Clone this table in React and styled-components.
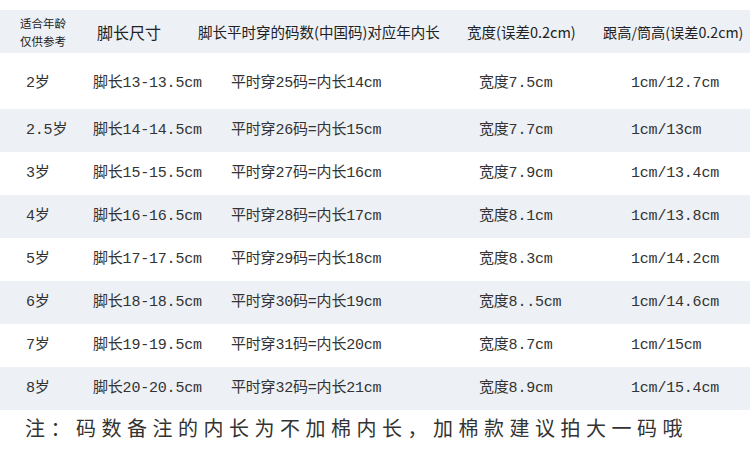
import React from "react";
import styled, { createGlobalStyle } from "styled-components";

const Global = createGlobalStyle`
  html, body { margin: 0; padding: 0; background: #ffffff; }
  body { font-family: "Noto Sans CJK SC", "Noto Sans", sans-serif; }
`;

const Page = styled.div`
  width: 750px;
  height: 458px;
  padding-top: 10px;
  box-sizing: border-box;
  background: #ffffff;
  overflow: hidden;
`;

const Table = styled.div`
  display: flex;
  flex-direction: column;
`;

const Row = styled.div`
  display: grid;
  grid-template-columns: 85px 110px 260px 135px 160px;
  height: ${(p) => p.$h}px;
  padding-top: ${(p) => p.$shift || 0}px;
  box-sizing: border-box;
  background: ${(p) => (p.$shade ? "#edf0f5" : "#ffffff")};
`;

const Cell = styled.div`
  display: flex;
  align-items: center;
  min-width: 0;
  padding-left: ${(p) => p.$pad}px;
  white-space: nowrap;
  overflow: visible;
`;

const HeadText = styled.span`
  font-family: "Noto Sans CJK SC", sans-serif;
  font-size: ${(p) => p.$size}px;
  line-height: ${(p) => p.$lh || 20}px;
  color: #222222;
`;

const DataText = styled.span`
  font-family: "Liberation Mono", "Noto Sans CJK SC", monospace;
  font-size: 15px;
  line-height: 20px;
  color: #333333;
  letter-spacing: -0.2px;
`;

const Note = styled.div`
  padding: 4px 0 0 25px;
  font-family: "Noto Sans CJK SC", sans-serif;
  font-size: 20px;
  line-height: 28px;
  letter-spacing: 5.5px;
  color: #333333;
  white-space: nowrap;
`;

const columns = [
  { headPad: 20, dataPad: 26 },
  { headPad: 12, dataPad: 8 },
  { headPad: 3, dataPad: 36 },
  { headPad: 12, dataPad: 24 },
  { headPad: 13, dataPad: 41 },
];

const rows = [
  ["2岁", "脚长13-13.5cm", "平时穿25码=内长14cm", "宽度7.5cm", "1cm/12.7cm"],
  ["2.5岁", "脚长14-14.5cm", "平时穿26码=内长15cm", "宽度7.7cm", "1cm/13cm"],
  ["3岁", "脚长15-15.5cm", "平时穿27码=内长16cm", "宽度7.9cm", "1cm/13.4cm"],
  ["4岁", "脚长16-16.5cm", "平时穿28码=内长17cm", "宽度8.1cm", "1cm/13.8cm"],
  ["5岁", "脚长17-17.5cm", "平时穿29码=内长18cm", "宽度8.3cm", "1cm/14.2cm"],
  ["6岁", "脚长18-18.5cm", "平时穿30码=内长19cm", "宽度8..5cm", "1cm/14.6cm"],
  ["7岁", "脚长19-19.5cm", "平时穿31码=内长20cm", "宽度8.7cm", "1cm/15cm"],
  ["8岁", "脚长20-20.5cm", "平时穿32码=内长21cm", "宽度8.9cm", "1cm/15.4cm"],
];

export default function App() {
  return (
    <Page>
      <Global />
      <Table>
        <Row $h={43} $shade>
          <Cell $pad={columns[0].headPad}>
            <HeadText $size={11.5} $lh={18}>
              适合年龄
              <br />
              仅供参考
            </HeadText>
          </Cell>
          <Cell $pad={columns[1].headPad}>
            <HeadText $size={16}>脚长尺寸</HeadText>
          </Cell>
          <Cell $pad={columns[2].headPad}>
            <HeadText $size={14.5}>脚长平时穿的码数(中国码)对应年内长</HeadText>
          </Cell>
          <Cell $pad={columns[3].headPad}>
            <HeadText $size={14.5}>宽度(误差0.2cm)</HeadText>
          </Cell>
          <Cell $pad={columns[4].headPad}>
            <HeadText $size={14.2}>跟高/筒高(误差0.2cm)</HeadText>
          </Cell>
        </Row>
        {rows.map((r, i) => (
          <Row
            key={i}
            $h={i === 0 ? 56 : 43}
            $shift={i === 0 ? 6 : 0}
            $shade={i % 2 === 1}
          >
            {r.map((txt, j) => (
              <Cell key={j} $pad={columns[j].dataPad}>
                <DataText>{txt}</DataText>
              </Cell>
            ))}
          </Row>
        ))}
      </Table>
      <Note>注：码数备注的内长为不加棉内长，加棉款建议拍大一码哦</Note>
    </Page>
  );
}
